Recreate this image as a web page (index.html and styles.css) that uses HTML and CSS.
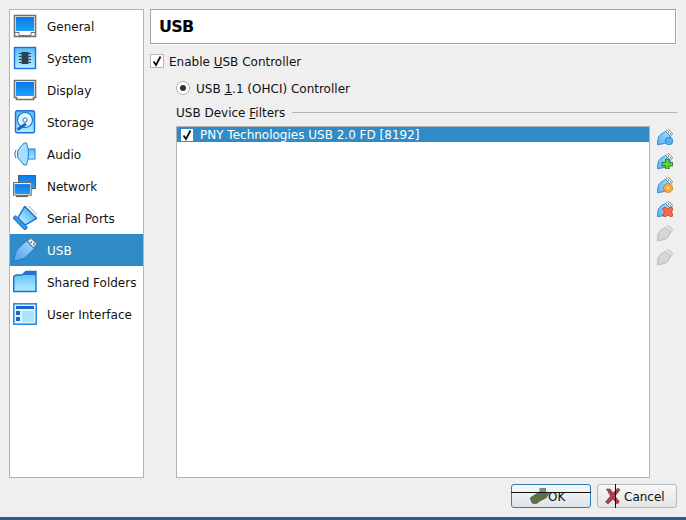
FILE: index.html
```html
<!DOCTYPE html>
<html lang="en">
<head>
<meta charset="utf-8">
<title>USB</title>
<link rel="stylesheet" href="styles.css">
</head>
<body>
<svg class="defs" aria-hidden="true">
  <defs>
    <linearGradient id="gs" x1="0" y1="0" x2="0" y2="1"><stop offset="0" stop-color="#0a78e6"/><stop offset="1" stop-color="#1fa0f8"/></linearGradient>
    <linearGradient id="gl" x1="0" y1="0" x2="0" y2="1"><stop offset="0" stop-color="#58bdf7"/><stop offset="1" stop-color="#b4ecff"/></linearGradient>
    <linearGradient id="gu" x1="0" y1="1" x2="1" y2="0"><stop offset="0" stop-color="#4a9fe8"/><stop offset="1" stop-color="#a4dcfa"/></linearGradient>
    <linearGradient id="gp" x1="0" y1="1" x2="1" y2="0"><stop offset="0" stop-color="#5ab2f0"/><stop offset="1" stop-color="#a8e0fc"/></linearGradient>
    <symbol id="plug" viewBox="0 0 16 16">
      <path d="M8.500 2.500 11.500.3 15.800 4.500 13.500 7.500z" fill="#fafafa" stroke="#777" stroke-width=".8"/>
      <path d="M11 2.600h1.200v1.200H11zM13 4.300h1.200v1.200H13z" fill="#555"/>
      <path d="M.5 15.700.8 11Q1.200 7.500 4 5L8.500 2.500l5 5L11 12q-2.500 2.800-6 3z" fill="url(#gp)" stroke="#1a78d8" stroke-width=".8"/>
    </symbol>
    <symbol id="plug-off" viewBox="0 0 16 16">
      <path d="M8.500 2.500 11.500.3 15.800 4.500 13.500 7.500z" fill="#f6f6f6" stroke="#a4a4a4" stroke-width=".8"/>
      <path d="M11 2.600h1.200v1.200H11zM13 4.300h1.200v1.200H13z" fill="#a0a0a0"/>
      <path d="M.5 15.700.8 11Q1.200 7.500 4 5L8.500 2.500l5 5L11 12q-2.500 2.800-6 3z" fill="#d6d6d6" stroke="#aeaeae" stroke-width=".8"/>
    </symbol>
  </defs>
</svg>
<div class="page">
  <div class="main">
    <nav class="sidebar">
      <div class="item"><svg class="icon" viewBox="0 0 24 24"><rect x="1.500" y="1.500" width="21" height="21" fill="#fff" stroke="#707070" stroke-width="1.600"/><rect x="3" y="3" width="18" height="14" fill="url(#gs)"/><path d="M2 18.500h4v3h12v-3h4" fill="none" stroke="#707070"/></svg><span>General</span></div>
      <div class="item"><svg class="icon" viewBox="0 0 24 24"><rect x="1.500" y="1.500" width="21" height="21" fill="url(#gl)" stroke="#1c6fd6" stroke-width="1.400"/><rect x="8.500" y="6" width="7" height="12" fill="#2f3f50"/><path d="M6 7.500h12M6 10.500h12M6 13.500h12M6 16.500h12" stroke="#2f3f50" stroke-dasharray="2.500 7"/></svg><span>System</span></div>
      <div class="item"><svg class="icon" viewBox="0 0 24 24"><path d="M1.500 2.500h21v17h-2v2h-17v-2h-2z" fill="#fff" stroke="#707070" stroke-width="1.600"/><rect x="3" y="4" width="18" height="14" fill="url(#gs)"/></svg><span>Display</span></div>
      <div class="item"><svg class="icon" viewBox="0 0 24 24"><rect x="2.500" y=".7" width="19" height="22" rx="2" fill="url(#gl)" stroke="#1a6fd0" stroke-width="1.400"/><circle cx="12" cy="10" r="7.500" fill="#e6f7ff" stroke="#1a6fd0" stroke-width="1.200"/><circle cx="12" cy="10" r="2.200" fill="#fff" stroke="#1a6fd0"/><path d="M5.500 19 12 14.500" stroke="#1a66c8" stroke-width="3" stroke-linecap="round"/></svg><span>Storage</span></div>
      <div class="item"><svg class="icon" viewBox="0 0 24 24"><path d="M3 8Q.4 12 3 16" fill="none" stroke="#1a6fd0"/><path d="M4.700 10Q4 12 4.700 14" fill="none" stroke="#1a6fd0"/><rect x="14" y="7" width="8" height="10" fill="url(#gl)" stroke="#1a80e0"/><path d="M5 8 11 1h2.500q2 5 2 11t-2 11H11l-6-7q-1-4 0-8z" fill="#a4e0fc" stroke="#1a80e0"/></svg><span>Audio</span></div>
      <div class="item"><svg class="icon" viewBox="0 0 24 24"><rect x="5.500" y="1.500" width="17" height="13" fill="url(#gs)" stroke="#606060"/><rect x=".8" y="9.300" width="17.200" height="11.500" fill="url(#gs)" stroke="#fff" stroke-width="1.600"/><rect x=".6" y="8.600" width="17.600" height="12.600" fill="none" stroke="#606060"/><path d="M3 21.500h12v1.600H3z" fill="#606060"/></svg><span>Network</span></div>
      <div class="item"><svg class="icon" viewBox="0 0 24 24"><g transform="rotate(45 12 12)"><path d="M4 1h16l.5 3h-17z" fill="#f6f6f6" stroke="#a0a0a0" stroke-width=".8"/><path d="M3.500 4h17L17 17H7z" fill="url(#gl)" stroke="#1a6fd0" stroke-width="1.400"/><rect x="3.500" y="17" width="17" height="3.500" rx="1" fill="#3d9aea" stroke="#1a6fd0"/></g></svg><span>Serial Ports</span></div>
      <div class="item selected"><svg class="icon" viewBox="0 0 24 24"><path d="M14.500 3 18 .5l5.500 5.500-3 3.500z" fill="#f6f6f6" stroke="#888"/><path d="M17.500 3.500h1.500v1.500h-1.500zM20 5.500h1.500V7H20z" fill="#555"/><path d="M.5 23.500 2 17q.5-4 4-7.500L13.500 3l7.500 7.500-6.500 7q-3.500 3.500-7.500 4z" fill="url(#gu)" stroke="#2a7ccc"/></svg><span>USB</span></div>
      <div class="item"><svg class="icon" viewBox="0 0 24 24"><path d="M.7 21.500V6.500L3 5h6l4-3.500h10v20z" fill="url(#gl)" stroke="#1a6fd0" stroke-width="1.400"/><path d="M9 5l4-3.500h10V5z" fill="#2a70d0"/></svg><span>Shared Folders</span></div>
      <div class="item"><svg class="icon" viewBox="0 0 24 24"><rect x=".8" y="1.800" width="22.400" height="20.400" fill="#dff4ff" stroke="#2a8ce8" stroke-width="1.600"/><rect x="3" y="4" width="18" height="3" fill="#1a66c8"/><rect x="3" y="9" width="4" height="4" fill="#1a66c8"/><rect x="3" y="15" width="4" height="4" fill="#1a66c8"/><rect x="9" y="9" width="12" height="11" fill="#a8e4fc"/></svg><span>User Interface</span></div>
    </nav>
    <section class="content">
      <header class="title">USB</header>
      <div class="check-row">
        <span class="box"><svg viewBox="0 0 12 12"><path d="M2.500 6.500 5 10l4.500-8.500" fill="none" stroke="#111" stroke-width="1.800"/></svg></span>
        <span class="label">Enable <u>U</u>SB Controller</span>
      </div>
      <div class="nested">
        <div class="radio-row"><span class="radio"></span><span class="label">USB <u>1</u>.1 (OHCI) Controller</span></div>
        <div class="group-title"><span>USB Device <u>F</u>ilters</span><i class="rule"></i></div>
        <div class="filters">
          <div class="list">
            <div class="filter"><span class="box small"><svg viewBox="0 0 12 12"><path d="M2.500 6.500 5 10l4.500-8.500" fill="none" stroke="#111" stroke-width="1.800"/></svg></span><span>PNY Technologies USB 2.0 FD [8192]</span></div>
          </div>
          <div class="tools">
            <svg class="tool" viewBox="0 0 16 16"><use href="#plug"/><circle cx="12" cy="12" r="3.800" fill="#58b4f0" stroke="#1a78d0" stroke-width=".8"/></svg>
            <svg class="tool" viewBox="0 0 16 16"><use href="#plug"/><path d="M8.500 6h3.600v3.400h3.500v3.600h-3.500v3h-3.600v-3H5v-3.600h3.500z" fill="#62d038" stroke="#1f7a1a" stroke-width=".9"/></svg>
            <svg class="tool" viewBox="0 0 16 16"><use href="#plug"/><circle cx="11" cy="11" r="4.600" fill="#f7a83c" stroke="#c8701a" stroke-dasharray="1.800 .9"/><circle cx="11" cy="11" r="1.400" fill="#fbe0a0"/></svg>
            <svg class="tool" viewBox="0 0 16 16"><use href="#plug"/><path d="M5.500 7.500 8 6l3 2 3-2 2.200 1.500L14.500 11l1.700 3.500L14 16l-3-2-3 2-2.500-1.500L7.500 11z" fill="#f46a4a" stroke="#c02818" stroke-width=".7"/></svg>
            <svg class="tool" viewBox="0 0 16 16"><use href="#plug-off"/></svg>
            <svg class="tool" viewBox="0 0 16 16"><use href="#plug-off"/></svg>
          </div>
        </div>
      </div>
    </section>
  </div>
  <footer class="footer">
    <button class="btn default" type="button"><svg class="btn-icon wide" viewBox="0 0 20 16"><path d="M0 10 9 4h7l3 2-3 4-6 3-4 3-4-1z" fill="#5f7048" stroke="#4c5a3a" stroke-width=".6"/><rect x="9.500" y="0" width="6.500" height="4.500" fill="#84808c"/></svg><span class="label">OK</span><i class="hline"></i></button>
    <button class="btn" type="button"><svg class="btn-icon" viewBox="0 0 16 16"><path d="M1.500 1h3.500l3 4 5-5 2 2L10 8l4.500 6-2.500 2-4-5-5 5-2.500-2L5.500 8z" fill="#ac3e4e" stroke="#7a2c38" stroke-width=".6"/></svg><span class="label">Cancel</span><i class="vline"></i></button>
  </footer>
  <div class="stripe"></div>
</div>
</body>
</html>
```
FILE: styles.css
```css
html, body {
  margin: 0;
  padding: 0;
}
body {
  font-family: "DejaVu Sans", sans-serif;
  font-size: 12px;
  color: #111;
  background: #efefef;
}
.defs {
  display: block;
  width: 0;
  height: 0;
}
.page {
  display: flex;
  flex-direction: column;
  width: 686px;
  height: 520px;
  overflow: hidden;
  background: #efefef;
}
.main {
  flex: 1;
  min-height: 0;
  display: flex;
  gap: 6px;
  padding: 9px 9px 0;
}
.sidebar {
  box-sizing: border-box;
  width: 135px;
  flex: none;
  border: 1px solid #b4b4b4;
  background: #fff;
}
.item {
  display: flex;
  align-items: center;
  gap: 10px;
  height: 32px;
  padding-left: 3px;
}
.item span,
.label {
  padding-top: 2px;
}
.item.selected {
  background: #308cc6;
  color: #fff;
}
.icon {
  width: 24px;
  height: 24px;
  flex: none;
}
.content {
  flex: 1;
  min-width: 0;
  display: flex;
  flex-direction: column;
}
.title {
  box-sizing: border-box;
  height: 35px;
  flex: none;
  margin-right: 1px;
  padding-left: 8px;
  border: 1px solid #a4a4a4;
  box-shadow: 1px 1px 0 #fff;
  background: #fff;
  font-size: 16px;
  font-weight: bold;
  letter-spacing: -0.7px;
  line-height: 34px;
  color: #000;
}
.check-row {
  display: flex;
  align-items: center;
  gap: 5px;
  height: 14px;
  margin-top: 10px;
  flex: none;
}
.box {
  box-sizing: border-box;
  display: block;
  width: 14px;
  height: 14px;
  flex: none;
  border: 1px solid #b8b8b8;
  background: #fff;
}
.box svg {
  display: block;
  width: 12px;
  height: 12px;
}
.nested {
  flex: 1;
  min-height: 0;
  display: flex;
  flex-direction: column;
  margin-left: 26px;
}
.radio-row {
  display: flex;
  align-items: center;
  gap: 6px;
  height: 14px;
  margin-top: 13px;
  flex: none;
}
.radio {
  box-sizing: border-box;
  display: flex;
  align-items: center;
  justify-content: center;
  width: 14px;
  height: 14px;
  flex: none;
  border: 1px solid #b0b0b0;
  border-radius: 50%;
  background: #fff;
}
.radio::after {
  content: "";
  width: 6px;
  height: 6px;
  border-radius: 50%;
  background: #333;
}
.group-title {
  display: flex;
  align-items: center;
  gap: 7px;
  height: 15px;
  margin-top: 10px;
  flex: none;
}
.rule {
  flex: 1;
  height: 1px;
  background: #b4b4b4;
}
.filters {
  flex: 1;
  min-height: 0;
  display: flex;
  gap: 7px;
  margin-top: 6px;
  padding-right: 4px;
}
.list {
  box-sizing: border-box;
  flex: 1;
  min-width: 0;
  border: 1px solid #b4b4b4;
  background: #fff;
}
.filter {
  display: flex;
  align-items: center;
  gap: 6px;
  height: 15px;
  padding-left: 3px;
  background: #308cc6;
  color: #fff;
}
.box.small {
  border-color: #308cc6;
}
.tools {
  display: flex;
  flex-direction: column;
  gap: 8px;
  padding-top: 3px;
  flex: none;
}
.tool {
  display: block;
  width: 16px;
  height: 16px;
}
.footer {
  display: flex;
  justify-content: flex-end;
  gap: 6px;
  height: 24px;
  padding: 6px 9px 9px;
  flex: none;
}
.btn {
  position: relative;
  box-sizing: border-box;
  display: flex;
  align-items: center;
  gap: 3px;
  width: 80px;
  height: 24px;
  padding: 0 0 0 7px;
  border: 1px solid #b8b8b8;
  border-radius: 3px;
  background: linear-gradient(#f8f8f8, #e4e4e4);
  font: inherit;
  color: #111;
}
.btn.default {
  border-color: #2f7fb4;
  background: linear-gradient(#f6f8f9, #dde4e8);
  padding-left: 18px;
  gap: 0;
}
.btn.default .label {
  margin-left: -2px;
}
.btn-icon {
  width: 16px;
  height: 16px;
  flex: none;
}
.btn-icon.wide {
  width: 20px;
}
.hline {
  position: absolute;
  left: -1px;
  right: -1px;
  top: 7px;
  height: 1px;
  background: #111;
}
.vline {
  position: absolute;
  left: 17px;
  top: -1px;
  bottom: -1px;
  width: 1px;
  background: #111;
}
.stripe {
  height: 3px;
  flex: none;
  background: #2a5d8a;
}
```
